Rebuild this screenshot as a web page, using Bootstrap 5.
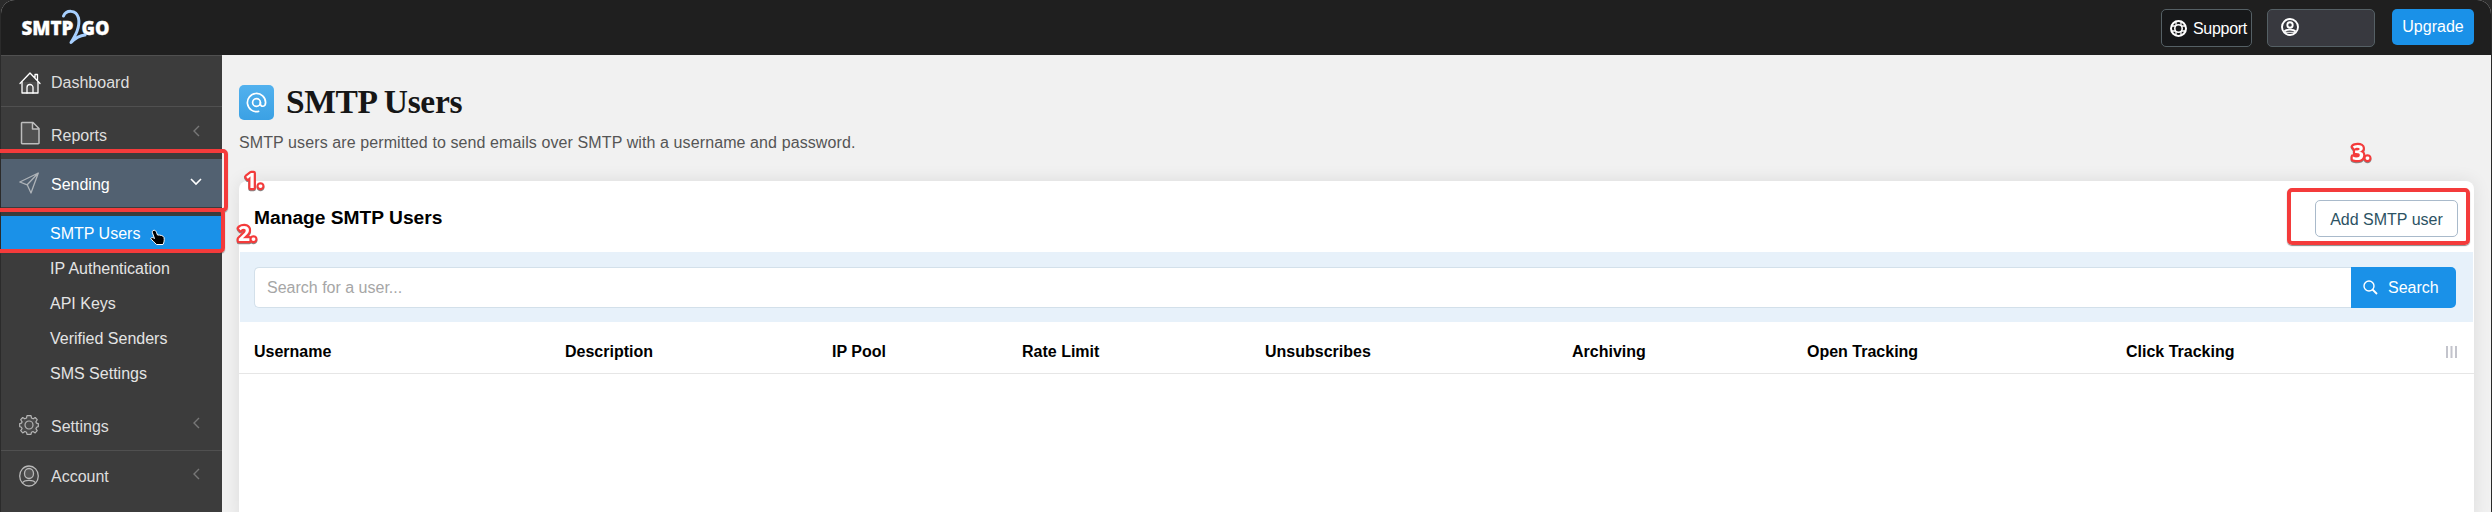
<!DOCTYPE html>
<html lang="en">
<head>
<meta charset="utf-8">
<title>SMTP Users</title>
<meta name="viewport" content="width=device-width, initial-scale=1">
<link rel="stylesheet" href="https://cdn.jsdelivr.net/npm/bootstrap@5.3.0/dist/css/bootstrap.min.css">
<style>
html,body{height:100%;overflow:hidden}
body{font-family:"Liberation Sans",Arial,sans-serif;font-size:16px;line-height:24px;background:#2b2b2b;color:#000}
.app{height:512px;margin:0 1px;border-radius:14px 14px 0 0;overflow:hidden;background:#f1f1f1}
.topbar{height:55px;background:#1f1f1f;padding:0 17px 0 20px}
.topbar .btn{font-size:16px;line-height:24px;border-radius:5px;--bs-btn-border-color:#556065;margin-top:9px}
.topbar .btn-support{width:91px;height:38px;background:#17181a;color:#fff;padding:0 0 0 8px}
.btn-support span{margin:2px 0 0 6px;letter-spacing:-.3px}
.topbar .btn-user{width:108px;height:38px;background:#38393f;padding:0 0 2px 13px;margin:9px 17px 0 15px}
.topbar .btn-up{width:82px;height:36px;background:#1a91e8;color:#fff;border:0;padding:0}
.side{width:221px;background:#3c3c3c;color:#dedede}
.side-link{color:#dedede;text-decoration:none;display:flex;align-items:center;padding:0 21px 0 18px}
.side-link .label{margin:4px 0 0 12px;flex:1}
.side-link svg{flex:none}
.side-link .chev{margin:-4px 1px 0 0}
.side-link.current{height:48px;background:#526171;color:#fff}
.sub-list{padding:9px 0 14px}
.sub-link{display:block;height:35px;line-height:37px;padding-left:49px;color:#e4e4e4;text-decoration:none}
.sub-link.active{height:34px;line-height:36px;background:#1a91e8;color:#fff}
.line-top{border-top:1px solid #505050}
.main{padding:30px 17px 0 17px;flex:1}
.tile{width:35px;height:35px;border-radius:5px;background:linear-gradient(#52b1ee,#3ba1e4)}
h1{font:bold 33.5px/34px "Liberation Serif",serif;letter-spacing:-.35px;color:#161616;margin:0 0 0 12px}
.intro{color:#555;letter-spacing:.1px;margin:11px 0 0 0}
.panel{background:#fff;border-radius:8px 8px 0 0;height:340px;margin-top:26px;box-shadow:0 0 18px rgba(0,0,0,.09)}
.panel-head{height:71px;padding:1px 16px 0 15px}
h2{font-size:19.2px;line-height:24px;font-weight:bold;margin:2px 0 0}
.btn-add{width:143px;height:37px;border:1px solid #a9bacb;border-radius:5px;color:#2c5263;padding:0;line-height:37px;margin-top:3px}
.band{background:#e7f1fa;height:70px;padding:15px 17px 0 14px;margin-left:1px;margin-right:1px}
.band .form-control{height:41px;font-size:16px;border:1px solid #d3e0ea;border-radius:5px 0 0 5px;padding:0 12px;border-right:0}
.band .form-control::placeholder{color:#a6a6a6;opacity:1}
.btn-search{width:105px;height:41px;background:#1a91e8;color:#fff;padding:0 0 0 12px;border:0;border-radius:0 5px 5px 0}
.cols{table-layout:fixed;width:100%;margin:0}
.cols th{height:51px;padding:9px 0 0 15px;vertical-align:middle;border-bottom:1px solid #e6e6e6;font-weight:bold;line-height:24px}
.cols th:last-child{padding:8px 17px 0 0;text-align:right}
.mark-box{position:absolute;border:4px solid #f43b3b;border-radius:5px;box-shadow:0 1px 1px rgba(60,60,60,.6);pointer-events:none}
.mark-a{left:-6px;top:149px;width:234px;height:63px}
.mark-b{left:-6px;top:208px;width:231px;height:45px}
.mark-c{left:2287px;top:188px;width:183px;height:57px}
.over{position:absolute;left:0;top:0;overflow:visible;pointer-events:none}
.num{font:bold 21px "Open Sans",sans-serif;letter-spacing:.6px;fill:#fff;stroke:#f43b3b;stroke-width:4.4px;stroke-linejoin:round;paint-order:stroke;filter:drop-shadow(0 1px 0 #888)}
</style>
</head>
<body>
<div class="app d-flex flex-column">
  <header class="topbar d-flex align-items-start flex-shrink-0">
    <svg width="92" height="48" viewBox="0 0 92 48" class="me-auto">
      <g fill="#fff" stroke="#fff" stroke-width=".3" font-family="Open Sans" font-weight="800" font-size="19">
        <text x="0.500" y="34.700" textLength="52" lengthAdjust="spacingAndGlyphs">SMTP</text>
        <text x="60.500" y="34.700" textLength="28" lengthAdjust="spacingAndGlyphs">GO</text>
      </g>
      <path d="M42.500 16C45 10 55 9 57.500 18C59.500 27 54 36 50 42.500C54 38.500 58 35.500 64 35" fill="none" stroke="#a8d0ff" stroke-width="3" stroke-linecap="round" stroke-linejoin="round"/>
    </svg>
    <button class="btn btn-support d-flex align-items-center">
      <svg width="17" height="17" viewBox="0 0 17 17" fill="none" stroke="#fff" class="flex-shrink-0"><circle cx="8.500" cy="8.500" r="7.500" stroke-width="2"/><circle cx="8.500" cy="8.500" r="3.700" stroke-width="1.600"/><path d="M6 1.500v4M11 1.500v4M6 11.500v4M11 11.500v4M1.500 6h4M1.500 11h4M11.500 6h4M11.500 11h4" stroke-width="1.300"/></svg>
      <span>Support</span>
    </button>
    <button class="btn btn-user d-flex align-items-center" aria-label="Profile">
      <svg width="18" height="18" viewBox="0 0 18 18" fill="none" stroke="#fff" stroke-width="1.900"><circle cx="9" cy="9" r="8"/><circle cx="9" cy="7" r="2.700"/><path d="M3.300 13.500C5.500 11 12.500 11 14.700 13.500"/><path d="M4 14.300h10" stroke-width="1"/></svg>
    </button>
    <button class="btn btn-up">Upgrade</button>
  </header>
  <div class="d-flex flex-grow-1">
    <nav class="side flex-shrink-0 line-top">
      <a href="#" class="side-link" style="height:50px">
        <svg width="22" height="22" viewBox="0 0 22 22" fill="none" stroke="#fff" stroke-width="1.300" stroke-linejoin="round" stroke-linecap="round" style="margin-top:3px"><path d="M3 10v11h16V10" fill="#4d4d4d"/><path d="M1 11.500L11 1l10 10.500M16 5.500V2.500h2.500V8"/><path d="M8 21v-5.500a3 3 0 0 1 6 0V21"/></svg>
        <span class="label" style="margin-left:10px">Dashboard</span></a>
      <a href="#" class="side-link line-top" style="height:53px">
        <svg width="20" height="24" viewBox="0 0 20 24" fill="#505050" stroke="#bdbdbd" stroke-width="1.500" stroke-linejoin="round" style="margin-left:1px"><path d="M2 1.500h11l6 6V22a.8.800 0 0 1-.8.800H2.500A1 1 0 0 1 1.500 22V2zM12.500 1.500V8H19"/></svg>
        <span class="label" style="margin:6px 0 0 11px">Reports</span>
        <svg width="8" height="12" viewBox="0 0 8 12" fill="none" stroke="#777" stroke-width="1.400" class="chev"><path d="M7 1L2 6l5 5"/></svg></a>
      <a href="#" class="side-link current">
        <svg width="20" height="22" viewBox="0 0 20 22" fill="none" stroke="#aeb3b8" stroke-width="1.300" stroke-linejoin="round"><path d="M19.300 1L.8 10l7.400 2.800L12 21zM19.300 1L8.200 12.800"/></svg>
        <span class="label">Sending</span>
        <svg width="12" height="8" viewBox="0 0 12 8" fill="none" stroke="#fff" stroke-width="1.600" style="margin:-3px -1px 0 0"><path d="M1 1l5 5 5-5"/></svg></a>
      <div class="sub-list">
        <a href="#" class="sub-link active">SMTP Users</a>
        <a href="#" class="sub-link">IP Authentication</a>
        <a href="#" class="sub-link">API Keys</a>
        <a href="#" class="sub-link">Verified Senders</a>
        <a href="#" class="sub-link">SMS Settings</a>
      </div>
      <a href="#" class="side-link" style="height:42px">
        <svg width="20" height="20" viewBox="0 0 20 20" fill="#4a4a4a" stroke="#b5b5b5" stroke-width="1.200" stroke-linejoin="round"><path d="M8 .7h4l.5 2.300 1.700.8 2-1.300 2 2.200-1.300 2.200.7 1.300 1.700.4v3l-1.700.6-.7 1.500 1.300 2-2 2.200-2.200-1.400-1.500.7-.5 2.100H8l-.5-2.100-1.600-.7-2.200 1.400-2-2.200 1.400-2-.7-1.500-1.700-.6v-3l1.700-.4.700-1.300-1.400-2.200 2-2.200 2.100 1.300L7.500 3z"/><circle cx="10" cy="10" r="4"/></svg>
        <span class="label">Settings</span>
        <svg width="8" height="12" viewBox="0 0 8 12" fill="none" stroke="#777" stroke-width="1.400" class="chev"><path d="M7 1L2 6l5 5"/></svg></a>
      <a href="#" class="side-link line-top" style="height:50px;margin-top:4px">
        <svg width="20" height="22" viewBox="0 0 20 22" fill="#444" stroke="#b9b9b9" stroke-width="1.300"><ellipse cx="10" cy="11" rx="9.300" ry="10"/><ellipse cx="10" cy="8.500" rx="4.500" ry="5" fill="#555"/><path d="M3.500 18c1.500-3.500 11.500-3.500 13 0"/></svg>
        <span class="label" style="margin-top:2px">Account</span>
        <svg width="8" height="12" viewBox="0 0 8 12" fill="none" stroke="#777" stroke-width="1.400" class="chev"><path d="M7 1L2 6l5 5"/></svg></a>
    </nav>
    <main class="main">
      <div class="d-flex">
        <div class="tile d-flex align-items-center justify-content-center">
          <svg width="21" height="21" viewBox="0 0 21 21" fill="none" stroke="#fff" stroke-width="1.700" stroke-linecap="round"><circle cx="10.500" cy="10.500" r="3.900"/><path d="M14.400 10.500v1.300c0 3.600 5.200 3.300 5.200-1.300a9.100 9.100 0 1 0-7 8.900"/></svg>
        </div>
        <h1>SMTP Users</h1>
      </div>
      <p class="intro">SMTP users are permitted to send emails over SMTP with a username and password.</p>
      <section class="panel">
        <div class="panel-head d-flex justify-content-between align-items-center">
          <h2>Manage SMTP Users</h2>
          <button class="btn btn-add">Add SMTP user</button>
        </div>
        <div class="band d-flex">
          <input class="form-control" placeholder="Search for a user...">
          <button class="btn btn-search d-flex align-items-center flex-shrink-0">
            <svg width="15" height="15" viewBox="0 0 15 15" fill="none" stroke="#fff" stroke-width="1.400"><circle cx="6" cy="6" r="5"/><path d="M9.500 9.500L14 14" stroke-width="1.800"/></svg>
            <span style="margin-left:10px">Search</span>
          </button>
        </div>
        <table class="cols">
          <colgroup><col style="width:311px"><col style="width:267px"><col style="width:190px"><col style="width:243px"><col style="width:307px"><col style="width:235px"><col style="width:319px"><col style="width:240px"><col></colgroup>
          <thead><tr><th>Username</th><th>Description</th><th>IP Pool</th><th>Rate Limit</th><th>Unsubscribes</th><th>Archiving</th><th>Open Tracking</th><th>Click Tracking</th>
          <th><svg width="11" height="12" viewBox="0 0 11 12" fill="#c3c4cc" class="d-inline-block"><path d="M0 0h2v12H0zM4.500 0h2v12h-2zM9 0h2v12H9z"/></svg></th></tr></thead>
        </table>
      </section>
    </main>
  </div>
</div>

<!-- walkthrough markers -->
<div class="mark-box mark-a"></div>
<div class="mark-box mark-b"></div>
<div class="mark-box mark-c"></div>
<svg class="over" width="2492" height="512">
  <g class="num"><text x="245" y="188">1.</text><text x="238" y="241">2.</text><text x="2352" y="160">3.</text></g>
  <path transform="translate(150,229)" d="M3 1.500c2-.8 3 .5 3.500 2L7.500 6c3 0 6 .6 6.500 2.500.6 2.500 0 5-1 7H6.500C4.500 13 2 11.500.8 9.500 1.500 8 3 8.500 4.500 9.500L2.500 4C2.200 3 2.200 2 3 1.500z" fill="#000" stroke="#fff" stroke-width="1"/>
</svg>
<script src="https://cdn.jsdelivr.net/npm/bootstrap@5.3.0/dist/js/bootstrap.bundle.min.js"></script>
</body>
</html>
